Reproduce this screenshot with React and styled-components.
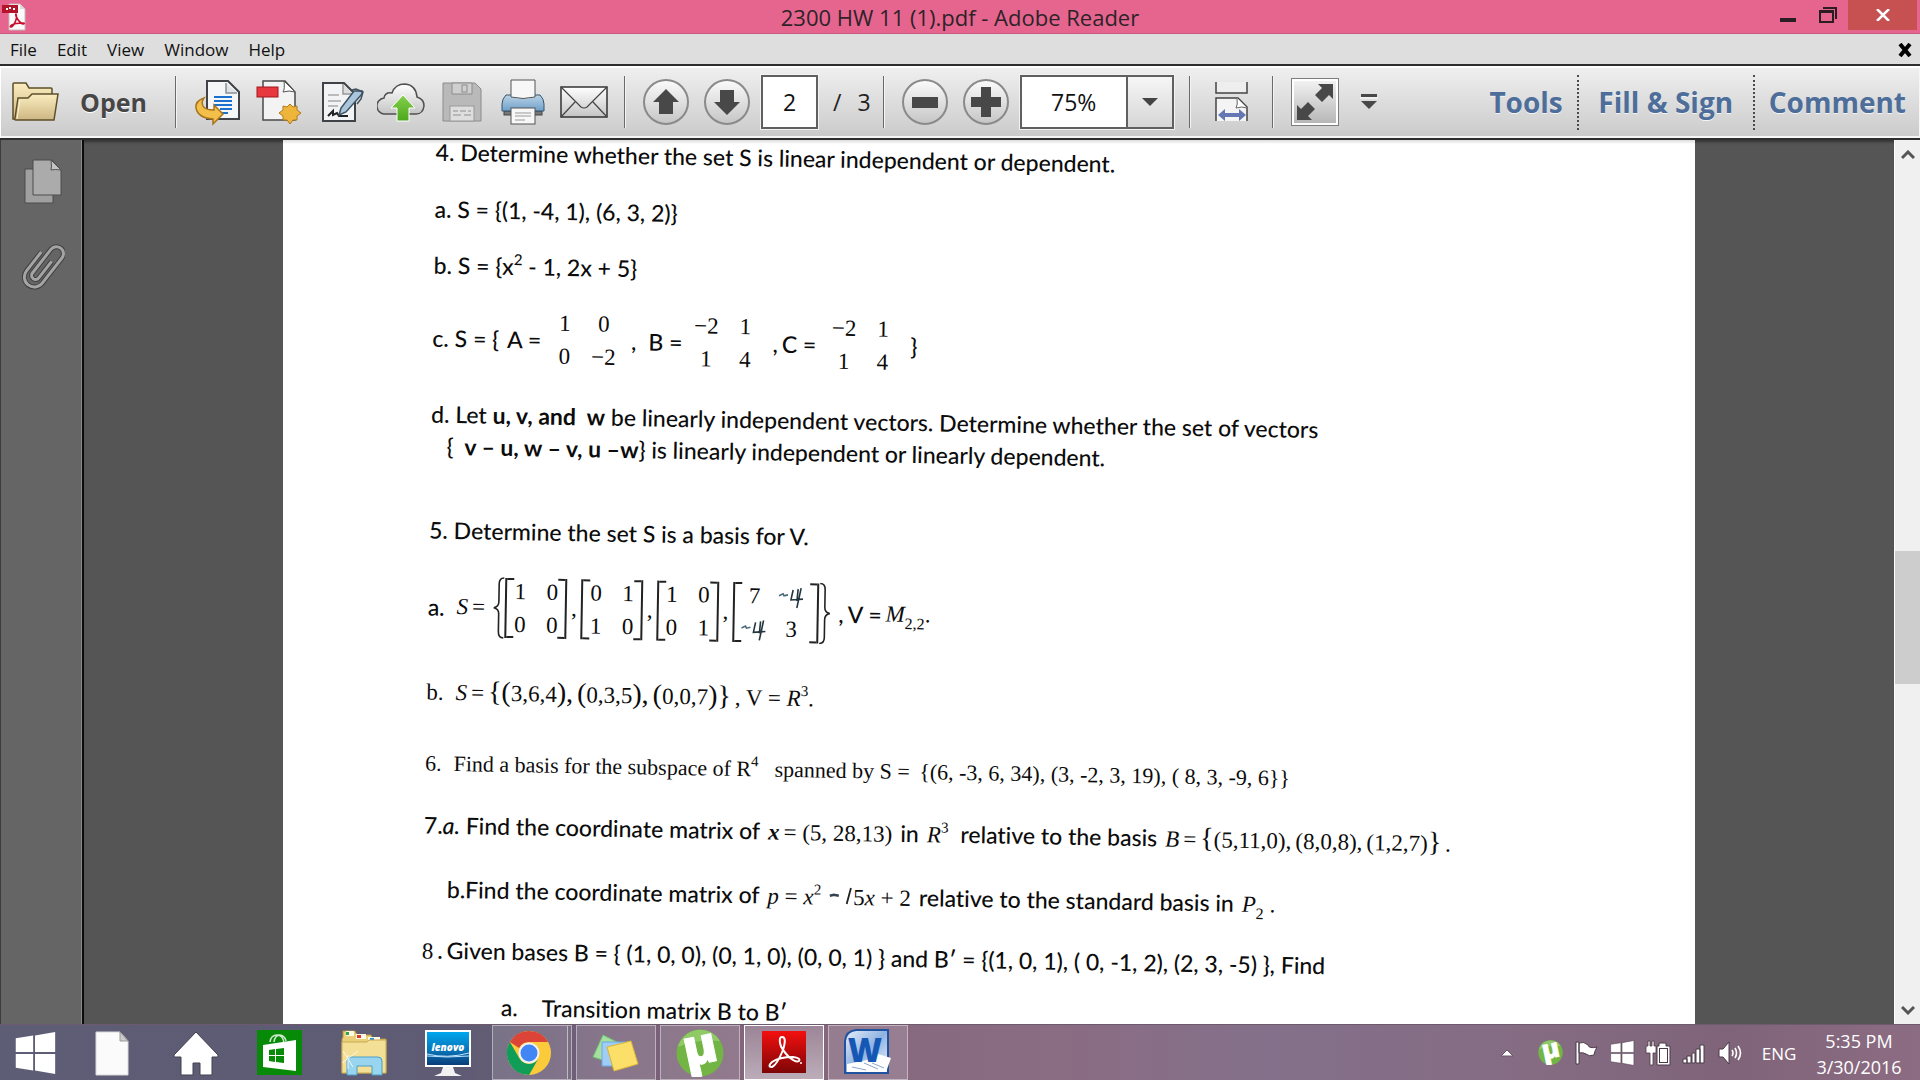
import React from "react";
import styled, { createGlobalStyle, css } from "styled-components";

const ui = '"Open Sans", "Noto Sans", sans-serif';
const body = 'Lato, "Open Sans", sans-serif';
const math = '"Liberation Serif", "DejaVu Serif", serif';

const GlobalStyle = createGlobalStyle`
  *, *::before, *::after { box-sizing: border-box; }
  html, body, #root { height: 100%; }
  body { margin: 0; font-family: ${ui}; overflow: hidden; }
  button, input, select { font-family: inherit; margin: 0; padding: 0; border: 0; background: none; color: inherit; }
  svg { display: block; flex: none; }
`;

const App = styled.div`
  display: flex;
  flex-direction: column;
  height: 100vh;
  background: #555;
`;

/* ---------- title bar ---------- */
const TitleBar = styled.header`
  display: grid;
  grid-template-columns: 1fr auto 1fr;
  align-items: center;
  height: 34px;
  flex: none;
  background: #e6658f;
  border-bottom: 1px solid #c9587e;
`;
const AppIcon = styled.span`
  padding-left: 2px;
`;
const Title = styled.h1`
  margin: 0;
  font-size: 22px;
  line-height: 34px;
  font-weight: 400;
  color: #2c2328;
`;
const WindowControls = styled.div`
  display: flex;
  justify-content: flex-end;
  align-self: start;
  padding-right: 3px;
`;
const ControlButton = styled.button`
  display: grid;
  place-items: center;
  width: ${(p) => (p.$close ? 69 : 40)}px;
  height: 30px;
  background: ${(p) => (p.$close ? "#c75050" : "transparent")};
`;

/* ---------- menu bar ---------- */
const MenuBar = styled.nav`
  display: flex;
  align-items: center;
  height: 30px;
  flex: none;
  padding: 2px 8px 0 10px;
  gap: 20px;
  background: #dedede;
`;
const MenuItem = styled.button`
  font-size: 17px;
  line-height: 28px;
  color: #111;
`;
const CloseDocument = styled.button`
  margin-left: auto;
`;

/* ---------- toolbar ---------- */
const Toolbar = styled.div`
  display: flex;
  align-items: center;
  height: 76px;
  flex: none;
  padding: 0 12px 0 10px;
  border-top: 2px solid #2e2e2e;
  border-bottom: 2px solid #2e2e2e;
  box-shadow: inset 1px 2px 0 #fff, inset -1px -2px 0 #f6f6f6;
  background: linear-gradient(#f0f0f0, #cacaca);
`;
const Separator = styled.span`
  width: 2px;
  height: 52px;
  margin: 0 ${(p) => p.$after || 10}px 0 ${(p) => p.$before || 10}px;
  background: linear-gradient(90deg, #6a6a6a 50%, #f4f4f4 50%);
`;
const OpenButton = styled.button`
  display: flex;
  align-items: center;
  gap: 20px;
  width: 155px;
  font-size: 25px;
  font-weight: 700;
  color: #464646;
  text-shadow: 0 1px 0 #fff;
`;
const ToolButton = styled.button`
  display: grid;
  place-items: center;
  width: 61px;
  height: 60px;
`;
const RoundButton = styled.button`
  display: grid;
  place-items: center;
  width: 46px;
  height: 46px;
  margin-right: 15px;
  border: 2px solid #8a8a8a;
  border-radius: 50%;
  background: linear-gradient(#fafafa, #c6c6c6);
`;
const PageInput = styled.input`
  width: 57px;
  height: 54px;
  margin-left: -4px;
  border: 2px solid #606060;
  outline: 1px solid #f2f2f2;
  background: #fff;
  font-size: 23px;
  text-align: center;
  color: #111;
`;
const PageCount = styled.span`
  display: flex;
  gap: 16px;
  width: 49px;
  margin-left: 15px;
  font-size: 23px;
  color: #222;
`;
const ZoomBox = styled.div`
  display: grid;
  grid-template-columns: 1fr 46px;
  width: 154px;
  height: 54px;
  margin-left: -4px;
  border: 2px solid #606060;
  outline: 1px solid #f2f2f2;
  background: #fff;
`;
const ZoomSelect = styled.select`
  grid-area: 1 / 1 / 2 / 3;
  appearance: none;
  padding-left: 29px;
  font-size: 23px;
  color: #111;
`;
const ZoomArrow = styled.span`
  grid-area: 1 / 2;
  display: grid;
  place-items: center;
  border-left: 2px solid #606060;
  background: linear-gradient(#f6f6f6, #d6d6d6);
  pointer-events: none;
`;
const FitButton = styled.button`
  display: grid;
  place-items: center;
  width: 48px;
  height: 48px;
  border: 1px solid #7e7e7e;
  box-shadow: inset 0 0 0 2px #fff;
  background: linear-gradient(#f4f4f4, #b4b4b4);
`;
const MoreButton = styled.button`
  margin-left: 21px;
`;
const Panels = styled.div`
  display: flex;
  margin-left: auto;
`;
const PanelButton = styled.button`
  height: 55px;
  padding: 0 14px;
  font-size: 28px;
  line-height: 55px;
  font-weight: 700;
  color: #4d6d9a;
  text-shadow: 0 1px 0 #f4f4f4;
  & + & { border-left: 2px dotted #4a4a4a; }
  &:nth-child(2) { min-width: 176px; }
  &:last-child { padding-right: 2px; }
`;

/* ---------- workspace ---------- */
const Workspace = styled.div`
  display: flex;
  flex: 1;
  min-height: 0;
`;
const SideBar = styled.aside`
  display: flex;
  flex-direction: column;
  align-items: center;
  gap: 36px;
  width: 84px;
  padding: 19px 0 0 2px;
  background: #656565;
  border-left: 1px solid #3c3c3c;
  border-right: 2px solid #0c0c0c;
  box-shadow: inset -1px 0 0 #8a8a8a;
`;
const Viewer = styled.main`
  display: flex;
  justify-content: center;
  flex: 1;
  min-width: 0;
  overflow: hidden;
  box-shadow: inset 0 4px 3px -2px #333;
`;
const Paper = styled.article`
  width: 78%;
  overflow: hidden;
  background: linear-gradient(#dcdcdc, #fff 4px);
`;
/* The sheet went through the scanner slightly crooked. */
const Scan = styled.div`
  margin-top: -5px;
  padding-left: 153px;
  transform: rotate(1deg);
  transform-origin: 0 0;
  font-family: ${body};
  font-size: 23px;
  font-weight: 500;
  font-variant-ligatures: none;
  line-height: 28px;
  color: #0c0c0c;
  white-space: nowrap;
`;
const Line = styled.p`
  display: flex;
  align-items: ${(p) => (p.$tall ? "center" : "baseline")};
  height: ${(p) => (p.$tall ? 68 : 28)}px;
  margin: ${(p) => p.$top || 0}px 0 0 ${(p) => p.$indent || 0}px;
  white-space: pre;
  ${(p) => p.$serif && css`font-family: ${math}; font-weight: 400; font-size: 22px;`}
`;
const Seg = styled.span`
  margin-left: ${(p) => p.$gap || 0}px;
`;
const M = styled.span`
  margin-left: ${(p) => p.$gap || 0}px;
  font-family: ${math};
  font-weight: ${(p) => (p.$bold ? 700 : 400)};
  font-style: ${(p) => (p.$italic ? "italic" : "normal")};
  font-size: ${(p) => (p.$big ? 28 : 23)}px;
`;
const Script = styled.span`
  font-size: ${(p) => (p.$sub ? 16 : 15)}px;
  line-height: 0;
  vertical-align: ${(p) => (p.$sub ? -7 : 10)}px;
`;
const MatrixBox = styled.span`
  display: grid;
  grid-template-columns: ${(p) => (p.$wide ? "32px 42px" : p.$open ? "39px 39px" : "32px 32px")};
  grid-template-rows: 33px 33px;
  place-items: center;
  place-content: center;
  height: 60px;
  width: ${(p) => (p.$wide ? 86 : p.$open ? 78 : 62)}px;
  margin-left: ${(p) => p.$gap || 0}px;
  font-family: ${math};
  font-weight: 400;
  font-size: 23px;
  ${(p) =>
    !p.$open &&
    css`
      background:
        linear-gradient(#222, #222) left top / 7px 2px,
        linear-gradient(#222, #222) left bottom / 7px 2px,
        linear-gradient(#222, #222) right top / 7px 2px,
        linear-gradient(#222, #222) right bottom / 7px 2px;
      background-repeat: no-repeat;
      border-left: 2px solid #222;
      border-right: 2px solid #222;
    `}
`;

const ScrollBar = styled.div`
  display: grid;
  grid-template-rows: 30px 381fr 133px 314fr 26px;
  width: 26px;
  background: #f0f0f0;
  border-left: 1px solid #fff;
`;
const ScrollButton = styled.button`
  display: grid;
  place-items: center;
`;
const ScrollThumb = styled.div`
  grid-row: 3;
  background: #cdcdcd;
`;

/* ---------- taskbar ---------- */
const TaskBar = styled.footer`
  display: flex;
  align-items: stretch;
  height: 56px;
  flex: none;
  background: linear-gradient(90deg, #5d5d75 0%, #5f5b74 24%, #755f78 32%, #83667c 40%, #8a6c83 55%, #84708a 66%, #856c83 80%, #7f6479 90%, #8c6c82 100%);
  border-top: 1px solid #6d5a6c;
`;
const TaskSlot = styled.button`
  display: grid;
  place-items: center;
  width: ${(p) => (p.$start ? 70 : 80)}px;
  margin-right: ${(p) => (p.$start ? 2 : 4)}px;
  border: 1px solid ${(p) => (p.$active ? "#fff" : p.$running ? "rgba(255,255,255,.42)" : "transparent")};
  background: ${(p) =>
    p.$active
      ? "linear-gradient(rgba(255,255,255,.2), rgba(255,255,255,.46))"
      : p.$running
      ? "rgba(255,255,255,.14)"
      : "transparent"};
  ${(p) => p.$stacked && css`padding-right: 6px; box-shadow: inset -3px 0 0 rgba(90,80,105,.7), inset -4px 0 0 rgba(255,255,255,.5);`}
`;
const Tray = styled.div`
  display: flex;
  align-items: center;
  margin-left: auto;
`;
const TrayButton = styled.button`
  display: grid;
  place-items: center;
  width: 36px;
  height: 36px;
  &:first-child { margin-right: 7px; }
`;
const Language = styled.button`
  width: 38px;
  margin-left: 12px;
  padding-top: 2px;
  font-size: 17px;
  color: #fff;
`;
const Clock = styled.time`
  display: flex;
  flex-direction: column;
  width: 122px;
  padding-top: 2px;
  font-size: 18px;
  line-height: 26px;
  text-align: center;
  color: #fff;
`;

/* ---------- small drawings ---------- */
const PdfMark = () => (
  <svg width="24" height="28" viewBox="0 0 24 28">
    <path d="M7 1h11l5 5v21H7z" fill="#fafafa" stroke="#c9b9bd" />
    <path d="M18 1v5h5" fill="#ddd" />
    <rect x="0" y="2" width="16" height="8" fill="#b3142a" />
    <path d="M4 6h2M7 5h2M11 6h2" stroke="#fff" strokeWidth="2" fill="none" />
    <path d="M14 11c2 5-3 13-5 13s0-4 12-4c3 0 0 2-2 0-4-3-6-9-5-9z" fill="none" stroke="#c8102e" strokeWidth="1.6" />
  </svg>
);
const Folder = () => (
  <svg width="50" height="42" viewBox="0 0 50 42">
    <defs>
      <linearGradient id="fold" x1="0" y1="0" x2="0" y2="1">
        <stop offset="0" stopColor="#fbedc0" /><stop offset="1" stopColor="#cdb682" />
      </linearGradient>
    </defs>
    <path d="M3 3q0-1 1-1h12l3 5h22q1 0 1 1v30H3z" fill="url(#fold)" stroke="#5e4f2a" strokeWidth="1.5" />
    <path d="M8 17h10l4-4h26l-4 26H6q-2 0-1-2z" fill="url(#fold)" stroke="#5e4f2a" strokeWidth="1.5" />
    <path d="M7 38l3-19" stroke="#fff4d2" fill="none" />
  </svg>
);
const Ico = ({ children, size = 48 }) => (
  <svg width={size} height={size} viewBox="0 0 48 48">{children}</svg>
);
const Convert = () => (
  <Ico>
    <path d="M13 3h21l11 11v27H13z" fill="#f4f6f8" stroke="#3f4247" strokeWidth="2" />
    <path d="M32 5v10h11" fill="#dfe3e6" stroke="#8a8f95" strokeWidth="1.5" />
    <path d="M20 19h18M20 23h18M20 27h18M26 31h12M28 35h6" stroke="#1c70cf" strokeWidth="2" />
    <path d="M10 20q-9 3-8 10 2 10 17 11v5l10-10-9-9v5q-9 0-11-4-2-4 1-8z" fill="#f2c04a" stroke="#a9731d" strokeWidth="1.5" />
  </Ico>
);
const CreatePdf = () => (
  <Ico>
    <path d="M8 3h22l10 11v28H8z" fill="#f3f3f3" stroke="#4a4a4a" strokeWidth="1.5" />
    <path d="M29 3q1 8-1 11 6-2 12 0z" fill="#fff" stroke="#555" />
    <rect x="2" y="9" width="21" height="10" fill="#e8383f" stroke="#a01820" />
    <path d="M35 26l3 3 4-1 0 4 4 3-4 3 0 4-4 0-3 4-3-4-4 0 0-4-4-3 4-3 0-4 4 1z" fill="#efb43a" stroke="#b07a1c" />
  </Ico>
);
const Sign = () => (
  <Ico>
    <path d="M7 5h21l11 11v27H7z" fill="#f2f3f4" stroke="#3f4247" strokeWidth="2" />
    <path d="M27 6v10h10" fill="#ddd" stroke="#999" strokeWidth="1.5" />
    <path d="M12 17h11M12 23h13M12 28h10" stroke="#bbb" strokeWidth="2" />
    <path d="M12 38l5-5v4l4-2 2 3h9" stroke="#222" strokeWidth="2" fill="none" />
    <path d="M23 37l2-7L38 13h8v3L30 34z" fill="#a9c6dc" stroke="#3d5160" strokeWidth="1.5" />
    <path d="M36 12l4-1 7 3-2 7-4 5" fill="none" stroke="#3d5160" strokeWidth="1.5" />
  </Ico>
);
const CloudUp = () => (
  <Ico>
    <defs>
      <linearGradient id="cl" x1="0" y1="0" x2="0" y2="1"><stop offset="0" stopColor="#fff" /><stop offset="1" stopColor="#c4c4c4" /></linearGradient>
      <linearGradient id="gr" x1="0" y1="0" x2="0" y2="1"><stop offset="0" stopColor="#86d04a" /><stop offset="1" stopColor="#4ba81e" /></linearGradient>
    </defs>
    <path d="M9 36a8 8 0 0 1-2-16q1-6 8-5 3-9 13-9 11 1 12 13 7 2 7 9-1 8-8 8z" fill="url(#cl)" stroke="#505050" strokeWidth="1.5" />
    <path d="M26 17l12 13h-6v13H20V30h-6z" fill="url(#gr)" stroke="#fff" strokeWidth="1" />
  </Ico>
);
const Save = () => (
  <Ico>
    <path d="M5 5h32l6 6v32H5z" fill="#b9b9b9" stroke="#8c8c8c" />
    <path d="M14 5h20v11H14z" fill="#cfcfcf" stroke="#8c8c8c" />
    <rect x="24" y="7" width="5" height="7" fill="none" stroke="#8c8c8c" />
    <rect x="12" y="28" width="24" height="15" fill="#dedede" stroke="#999" />
    <path d="M15 33h5M22 33h6M30 33h3M15 37h8M26 37h7" stroke="#aaa" strokeWidth="1.5" />
  </Ico>
);
const Print = () => (
  <Ico>
    <defs><linearGradient id="pr" x1="0" y1="0" x2="0" y2="1"><stop offset="0" stopColor="#b9d3e6" /><stop offset="1" stopColor="#6f9fc9" /></linearGradient></defs>
    <rect x="5" y="33" width="38" height="4" fill="#777" stroke="#444" />
    <path d="M7 17h34q4 4 4 9v7H3v-7q0-5 4-9z" fill="url(#pr)" stroke="#34566f" />
    <path d="M12 2h24v17q-12 3-24 0z" fill="#f7f7f7" stroke="#555" />
    <rect x="12" y="30" width="24" height="16" fill="#f7f7f7" stroke="#555" />
    <path d="M16 35h16M16 38h16M16 42h10" stroke="#999" />
  </Ico>
);
const Mail = () => (
  <Ico>
    <rect x="1" y="9" width="46" height="30" fill="url(#cl)" stroke="#333" strokeWidth="1.5" />
    <path d="M1 9l20 20q3 2 6 0L47 9M1 39l14-15M47 39L33 24" fill="none" stroke="#444" strokeWidth="1.2" />
  </Ico>
);
const ArrowGlyph = ({ down }) => (
  <svg width="28" height="28" viewBox="0 0 28 28">
    <path d={down ? "M7 2h14v12h6L14 27 1 14h6z" : "M14 1l13 13h-6v12H7V14H1z"} fill="#484848" />
  </svg>
);
const PlusMinus = ({ plus }) => (
  <svg width="32" height="32" viewBox="0 0 32 32">
    <path d={plus ? "M11 1h10v10h10v10H21v10H11V21H1V11h10z" : "M3 11h26v11H3z"} fill="#484848" />
  </svg>
);
const FitWidth = () => (
  <svg width="34" height="40" viewBox="0 0 34 40">
    <path d="M1 0v11h31V0" fill="#eee" stroke="#444" strokeWidth="1.5" />
    <path d="M1 39V16h22l9 9v14" fill="#f4f4f4" stroke="#444" strokeWidth="1.5" />
    <path d="M22 16q1 7-1 10 6-2 11 0" fill="#fff" stroke="#666" />
    <path d="M3 33l7-6v4h14v-4l7 6-7 6v-4H10v4z" fill="#6477b5" />
  </svg>
);
const Expand = () => (
  <svg width="38" height="38" viewBox="0 0 38 38">
    <path d="M22 1h15v15l-4-4-7 7-7-7 7-7zM1 37V22l4 4 7-7 7 7-7 7 4 4z" fill="#484848" />
  </svg>
);
const Chevron = ({ down }) => (
  <svg width="14" height="10" viewBox="0 0 14 10">
    <path d={down ? "M1 1l6 6 6-6" : "M1 8l6-6 6 6"} stroke="#555" strokeWidth="3" fill="none" />
  </svg>
);
const Pages = () => (
  <svg width="40" height="46" viewBox="0 0 40 46">
    <path d="M2 10h28v34H2z" fill="#a0a0a0" stroke="#4c4c4c" />
    <path d="M10 1h19l9 10v25H10z" fill="#ababab" stroke="#4c4c4c" />
    <path d="M28 1q1 7 0 10 4-1 10 0z" fill="#c4c4c4" stroke="#555" />
  </svg>
);
const Clip = () => (
  <svg width="44" height="50" viewBox="0 0 44 50">
    <g transform="rotate(38 22 25)" fill="none">
      <path d="M12 15v24a9 9 0 0 0 20 0V7a7 7 0 0 0-14 0v30a4 4 0 0 0 8 0V16" stroke="#3e3e3e" strokeWidth="5" />
      <path d="M12 15v24a9 9 0 0 0 20 0V7a7 7 0 0 0-14 0v30a4 4 0 0 0 8 0V16" stroke="#a4a4a4" strokeWidth="3" />
    </g>
  </svg>
);
const Brace = ({ flip }) => (
  <svg width="12" height="62" viewBox="0 0 12 62">
    <path d={flip ? "M1 1q5 0 5 6v18q0 5 5 6-5 1-5 6v18q0 6-5 6" : "M11 1q-5 0-5 6v18q0 5-5 6 5 1 5 6v18q0 6 5 6"} fill="none" stroke="#222" strokeWidth="1.6" />
  </svg>
);
/* pen corrections left on the scanned sheet */
const PenFour = () => (
  <svg width="28" height="26" viewBox="0 0 28 26">
    <path d="M1 12l4-2 1 2 4-1" fill="none" stroke="#4c6b78" strokeWidth="1.6" />
    <path d="M15 6l-2 10 12-1M20 5l-1 12M23 4l-4 20" fill="none" stroke="#23353e" strokeWidth="1.6" />
  </svg>
);
const PenOne = () => (
  <svg width="24" height="18" viewBox="0 0 24 18">
    <path d="M1 9l4-1 5 1" fill="none" stroke="#33424e" strokeWidth="2.5" />
    <path d="M22 1l-4 16" fill="none" stroke="#222" strokeWidth="1.8" />
  </svg>
);

const WinPath = "M3 8l19-3v18H3zM24 5l22-4v22H24zM3 25h19v18L3 40zM24 25h22v22l-22-4z";
const StartLogo = () => <Ico size={44}><path d={WinPath} fill="#fff" /></Ico>;
const BlankPage = () => (
  <Ico><path d="M8 3h24l8 9v34H8z" fill="#fbfbfb" stroke="#d8d8d8" /><path d="M32 3v9h8z" fill="#ccc" stroke="#999" /></Ico>
);
const Home = () => (
  <Ico><path d="M24 3L46 26v2h-6v18H28V34h-7v12H9V28H2v-2z" fill="#fff" stroke="#43404f" strokeWidth="1" /></Ico>
);
const Store = () => (
  <Ico>
    <rect x="1" y="1" width="45" height="45" fill="#078a07" />
    <path d="M14 13q1-7 7-7t7 8M18 13q1-7 6-7 5 1 6 6" fill="none" stroke="#cfe8cf" strokeWidth="1.5" />
    <path d="M7 16l33-5v31L7 38z" fill="#fff" />
    <path d="M13 21l6-1v6h-6zM20 20l8-1v7h-8zM13 27h6v6l-6-1zM20 27h8v7l-8-1z" fill="#078a07" />
  </Ico>
);
const Explorer = () => (
  <Ico>
    <path d="M3 8V2h12l2 4h14l1 4h14v34H2V10z" fill="#e8cf78" stroke="#b49542" />
    <path d="M6 2h8v5H6zM16 5h10v5H16zM28 8h12v5H28z" fill="#fff8e4" />
    <path d="M6 3h3v3H6z" fill="#2fa54b" /><path d="M17 6h4v3h-4z" fill="#e0362c" /><path d="M30 9h4v3h-4z" fill="#2b8fd6" />
    <path d="M2 13h25l2-2h17v33H2z" fill="#f3df95" stroke="#c9ab57" />
    <path d="M7 46V32q0-4 4-4h27q4 0 4 4v14H32V37H17v9z" fill="#9ad5f0" stroke="#4a9fc9" />
    <path d="M2 34l16-12M3 22l10 16M8 26v14" stroke="#fff" opacity=".8" />
  </Ico>
);
const Monitor = () => (
  <Ico>
    <defs><linearGradient id="mon" x1="0" y1="0" x2="0" y2="1"><stop offset="0" stopColor="#00a7ee" /><stop offset=".6" stopColor="#0770b4" /><stop offset="1" stopColor="#0b3c78" /></linearGradient></defs>
    <rect x="1" y="1" width="46" height="37" fill="#fff" />
    <rect x="3" y="3" width="42" height="33" fill="url(#mon)" />
    <path d="M3 25q20 5 42-1M3 27q20 2 42 0" stroke="#bfe4ff" fill="none" />
    <text x="24" y="22" textAnchor="middle" fontFamily="Open Sans, sans-serif" fontStyle="italic" fontWeight="800" fontSize="10" fill="#fff">lenovo</text>
    <path d="M19 38h10l2 6 7 3H10l7-3z" fill="#f2f2f2" />
  </Ico>
);
const Chrome = () => (
  <Ico>
    <circle cx="24" cy="24" r="22" fill="#fccb3c" />
    <path d="M4.900 13A22 22 0 0 1 43.100 13H24A11 11 0 0 0 14 19z" fill="#db4437" />
    <path d="M4.900 13A22 22 0 0 0 24 46L33.500 29.500A11 11 0 0 1 14.500 29.500z" fill="#0f9d58" />
    <circle cx="24" cy="24" r="10.500" fill="#f2f2f2" /><circle cx="24" cy="24" r="8.500" fill="#4285f4" />
  </Ico>
);
const Notes = () => (
  <Ico>
    <path d="M11 6l24 12-9 18L1 28z" fill="#a6dfa2" stroke="#6fbf6e" />
    <path d="M10 13h26v24H10z" fill="#9fcdf5" stroke="#6ea9dd" />
    <path d="M15 18l24-6 7 23-24 7z" fill="#fbdf68" stroke="#d9b53a" />
  </Ico>
);
const Torrent = ({ size }) => (
  <Ico size={size}>
    <circle cx="24" cy="24" r="23.500" fill="#72b545" />
    <path d="M2 18a23 23 0 0 1 42-6Q20 10 2 18z" fill="#8fca66" />
    <text x="25" y="35" textAnchor="middle" fontFamily="Open Sans, sans-serif" fontWeight="800" fontSize="50" fill="#fff" stroke="#fff" strokeWidth="1" transform="rotate(-12 24 24)">µ</text>
  </Ico>
);
const Acrobat = () => (
  <Ico>
    <defs><linearGradient id="acr" x1="0" y1="0" x2="0" y2="1"><stop offset="0" stopColor="#f40f0f" /><stop offset="1" stopColor="#7d0606" /></linearGradient></defs>
    <rect x="2" y="2" width="44" height="42" fill="url(#acr)" />
    <path d="M22 8q5 0 1 13Q17 36 12 38q-5 0 0-5 7-5 21-5 8 1 6 4-3 2-10-4-8-8-9-14-1-6 2-6z" fill="none" stroke="#fff" strokeWidth="2" />
    <circle cx="41" cy="34" r="1" fill="#fff" />
  </Ico>
);
const Word = () => (
  <Ico>
    <defs><linearGradient id="wd" x1="0" y1="0" x2="1" y2="1"><stop offset="0" stopColor="#e9f0fb" /><stop offset=".5" stopColor="#8fb2e2" /><stop offset="1" stopColor="#f2f6fc" /></linearGradient></defs>
    <path d="M12 1h32v43H1V12Q2 2 12 1z" fill="url(#wd)" stroke="#1f53a0" strokeWidth="2" />
    <path d="M3 35l20-4 11-6 13 4-5 14H3z" fill="#fff" />
    <path d="M20 34l14 6M28 34l12 5M8 38l14 3" stroke="#8aa6cf" />
    <text x="21" y="33" textAnchor="middle" fontFamily="Open Sans, sans-serif" fontWeight="800" fontSize="33" fill="#1457b5">W</text>
  </Ico>
);
const TrayIco = ({ children }) => <svg width="26" height="26" viewBox="0 0 26 26">{children}</svg>;
const Flag = () => (
  <TrayIco><path d="M3 2h3v22H3zM6 3q5-2 9 2 1 4 9 2-2 3-3 8-5 2-8-1-3-2-7-1z" fill="#fff" stroke="#4a3a48" /></TrayIco>
);
const Battery = () => (
  <TrayIco>
    <path d="M14 3h7v3h4v19H12V6h2z" fill="#fff" stroke="#4a3a48" />
    <path d="M14 8h9v15h-9z" fill="#4a3a48" />
    <path d="M15 9h7v13h-7z" fill="#fff" />
    <path d="M3 1h2v5h2V1h2v5h2v7H8v12H5V13H1V6h2z" fill="#fff" stroke="#4a3a48" strokeWidth=".8" />
  </TrayIco>
);
const Signal = () => (
  <TrayIco><path d="M2 19h4v4H2zM6 16h4v7H6zM11 13h3v10h-3zM15 9h4v14h-4zM19 5h4v18h-4z" fill="#fff" stroke="#4a3a48" /></TrayIco>
);
const Speaker = () => (
  <TrayIco>
    <path d="M2 9h4l6-7v22l-6-7H2z" fill="#fff" stroke="#4a3a48" />
    <path d="M15 10q2 3 0 6M18 8q3 5 0 10M21 6q5 7 0 14" fill="none" stroke="#fff" strokeWidth="1.6" />
  </TrayIco>
);

/* ---------- document helpers ---------- */
const Matrix = ({ cells, ...rest }) => (
  <MatrixBox {...rest}>{cells.map((c, i) => <span key={i}>{c}</span>)}</MatrixBox>
);

const tools = [
  ["Convert", Convert], ["Create PDF", CreatePdf], ["Sign", Sign], ["Upload", CloudUp],
  ["Save", Save], ["Print", Print], ["Email", Mail],
];

const Document = () => (
  <Scan>
    <Line>4. Determine whether the set S is linear independent or dependent.</Line>
    <Line $top={29}>{"a. S = {(1, -4, 1), (6, 3, 2)}"}</Line>
    <Line $top={28}><Seg>{"b. S = {x"}<Script>2</Script>{" - 1, 2x + 5}"}</Seg></Line>
    <Line $top={25} $tall>
      <Seg>{"c. S = {"}</Seg><Seg $gap={8}>A =</Seg>
      <Matrix $open $gap={4} cells={["1", "0", "0", "−2"]} />
      <Seg $gap={8}>,</Seg><Seg $gap={12}>B =</Seg>
      <Matrix $open $gap={4} cells={["−2", "1", "1", "4"]} />
      <Seg $gap={8}>,</Seg><Seg $gap={4}>C =</Seg>
      <Matrix $open $gap={8} cells={["−2", "1", "1", "4"]} />
      <Seg $gap={8}>{"}"}</Seg>
    </Line>
    <Line $top={28}><Seg>d. Let <b>u, v, and  w</b> be linearly independent vectors. Determine whether the set of vectors</Seg></Line>
    <Line $top={4} $indent={16}><Seg>{"{ "}<b> v – u, w – v, u –w</b>{"} is linearly independent or linearly dependent."}</Seg></Line>
    <Line $top={56}>5. Determine the set S is a basis for V.</Line>
    <Line $top={29} $tall>
      <Seg>a.</Seg><M $gap={12} $italic>S</M><M $gap={4}>=</M>
      <Seg $gap={8}><Brace /></Seg>
      <Matrix cells={["1", "0", "0", "0"]} /><M $gap={4}>,</M>
      <Matrix $gap={4} cells={["0", "1", "1", "0"]} /><M $gap={4}>,</M>
      <Matrix $gap={4} cells={["1", "0", "0", "1"]} /><M $gap={4}>,</M>
      <Matrix $gap={4} $wide cells={["7", <PenFour />, <PenFour />, "3"]} />
      <Brace flip />
      <Seg $gap={8}>,</Seg><Seg $gap={4}>V =</Seg>
      <M $gap={4}><i>M</i><Script $sub>2,2</Script>.</M>
    </Line>
    <Line $top={36}>
      <M>b.</M><M $gap={12} $italic>S</M><M $gap={4}>=</M>
      <M $gap={4} $big>{"{("}</M><M>3,6,4</M><M $big>),</M>
      <M $gap={4} $big>(</M><M>0,3,5</M><M $big>),</M>
      <M $gap={4} $big>(</M><M>0,0,7</M><M $big>{")}"}</M>
      <M $gap={4}>{", V = "}<i>R</i><Script>3</Script>.</M>
    </Line>
    <Line $top={45} $serif>
      <Seg>6.</Seg><Seg $gap={12}>Find a basis for the subspace of R<Script>4</Script></Seg>
      <Seg $gap={16}>{"spanned by S = "}</Seg><Seg $gap={4}>{"{(6, -3, 6, 34), (3, -2, 3, 19), ( 8, 3, -9, 6}}"}</Seg>
    </Line>
    <Line $top={33}>
      <Seg>7.<i>a.</i> Find the coordinate matrix of</Seg>
      <M $gap={8} $bold $italic>x</M><M $gap={4}>= (5, 28,13)</M><Seg $gap={8}>in</Seg>
      <M $gap={8}><i>R</i><Script>3</Script></M><Seg $gap={12}>relative to the basis</Seg>
      <M $gap={8} $italic>B</M><M $gap={4}>=</M><M $gap={4} $big>{"{"}</M>
      <M>(5,11,0),</M><M $gap={4}>(8,0,8),</M><M $gap={4}>(1,2,7)</M><M $big>{"}"}</M><M $gap={4}>.</M>
    </Line>
    <Line $top={36} $indent={24}>
      <Seg>b.Find the coordinate matrix of</Seg>
      <M $gap={8}><i>p</i> = <i>x</i><Script>2</Script></M>
      <Seg $gap={8}><PenOne /></Seg><M>5<i>x</i> + 2</M>
      <Seg $gap={8}>relative to the standard basis in</Seg>
      <M $gap={8}><i>P</i><Script $sub>2</Script> .</M>
    </Line>
    <Line $top={33}><M>8</M><Seg $gap={4}>.</Seg><Seg $gap={4}>{"Given bases B = { (1, 0, 0), (0, 1, 0), (0, 0, 1) } and B′ = {(1, 0, 1), ( 0, -1, 2), (2, 3, -5) }, Find"}</Seg></Line>
    <Line $top={28} $indent={80}><Seg>a.</Seg><Seg $gap={24}>Transition matrix B to B′</Seg></Line>
  </Scan>
);

export default function ReaderWindow() {
  return (
    <App>
      <GlobalStyle />
      <TitleBar>
        <AppIcon><PdfMark /></AppIcon>
        <Title>2300 HW 11 (1).pdf - Adobe Reader</Title>
        <WindowControls>
          <ControlButton aria-label="Minimize">
            <svg width="16" height="16" viewBox="0 0 16 16"><path d="M0 11h16v4H0z" fill="#2b1d24" /></svg>
          </ControlButton>
          <ControlButton aria-label="Restore">
            <svg width="18" height="16" viewBox="0 0 18 16"><path d="M4 1h13v11M1 4h13v11H1zM1 5h13" fill="none" stroke="#2b1d24" strokeWidth="2" /></svg>
          </ControlButton>
          <ControlButton $close aria-label="Close">
            <svg width="14" height="12" viewBox="0 0 14 12"><path d="M1 0l12 12M13 0L1 12" stroke="#fff" strokeWidth="2.500" /></svg>
          </ControlButton>
        </WindowControls>
      </TitleBar>
      <MenuBar>
        {["File", "Edit", "View", "Window", "Help"].map((m) => <MenuItem key={m}>{m}</MenuItem>)}
        <CloseDocument aria-label="Close document">
          <svg width="14" height="14" viewBox="0 0 14 14"><path d="M2 1l10 12M12 1L2 13" stroke="#000" strokeWidth="4" /></svg>
        </CloseDocument>
      </MenuBar>
      <Toolbar>
        <OpenButton><Folder />Open</OpenButton>
        <Separator />
        {tools.map(([name, Icon]) => <ToolButton key={name} aria-label={name}><Icon /></ToolButton>)}
        <Separator $after={17} />
        <RoundButton aria-label="Previous page"><ArrowGlyph /></RoundButton>
        <RoundButton aria-label="Next page"><ArrowGlyph down /></RoundButton>
        <PageInput aria-label="Page number" defaultValue="2" />
        <PageCount><span>/</span><span>3</span></PageCount>
        <Separator $before={1} $after={17} />
        <RoundButton aria-label="Zoom out"><PlusMinus /></RoundButton>
        <RoundButton aria-label="Zoom in"><PlusMinus plus /></RoundButton>
        <ZoomBox>
          <ZoomSelect aria-label="Zoom level" defaultValue="75%">
            <option>50%</option><option>75%</option><option>100%</option>
          </ZoomSelect>
          <ZoomArrow><svg width="16" height="10" viewBox="0 0 16 10"><path d="M0 1h16L8 9z" fill="#444" /></svg></ZoomArrow>
        </ZoomBox>
        <Separator $before={15} />
        <ToolButton aria-label="Fit width"><FitWidth /></ToolButton>
        <Separator $after={17} />
        <FitButton aria-label="Full screen"><Expand /></FitButton>
        <MoreButton aria-label="More tools">
          <svg width="18" height="16" viewBox="0 0 18 16"><path d="M1 0h16v3H1zM1 7h16l-8 8z" fill="#484848" /><path d="M0 4h18" stroke="#fff" /></svg>
        </MoreButton>
        <Panels>
          <PanelButton>Tools</PanelButton>
          <PanelButton>Fill &amp; Sign</PanelButton>
          <PanelButton>Comment</PanelButton>
        </Panels>
      </Toolbar>
      <Workspace>
        <SideBar>
          <button aria-label="Page thumbnails"><Pages /></button>
          <button aria-label="Attachments"><Clip /></button>
        </SideBar>
        <Viewer><Paper><Document /></Paper></Viewer>
        <ScrollBar>
          <ScrollButton aria-label="Scroll up"><Chevron /></ScrollButton>
          <span />
          <ScrollThumb />
          <span />
          <ScrollButton aria-label="Scroll down"><Chevron down /></ScrollButton>
        </ScrollBar>
      </Workspace>
      <TaskBar>
        <TaskSlot $start aria-label="Start"><StartLogo /></TaskSlot>
        <TaskSlot aria-label="New document"><BlankPage /></TaskSlot>
        <TaskSlot aria-label="Home"><Home /></TaskSlot>
        <TaskSlot aria-label="Store"><Store /></TaskSlot>
        <TaskSlot aria-label="File Explorer"><Explorer /></TaskSlot>
        <TaskSlot aria-label="Lenovo"><Monitor /></TaskSlot>
        <TaskSlot $running $stacked aria-label="Chrome"><Chrome /></TaskSlot>
        <TaskSlot $running aria-label="Sticky Notes"><Notes /></TaskSlot>
        <TaskSlot $running aria-label="µTorrent"><Torrent /></TaskSlot>
        <TaskSlot $running $active aria-label="Adobe Reader"><Acrobat /></TaskSlot>
        <TaskSlot $running aria-label="Word"><Word /></TaskSlot>
        <Tray>
          <TrayButton aria-label="Show hidden icons">
            <svg width="14" height="8" viewBox="0 0 14 8"><path d="M7 1l6 6H1z" fill="#fff" stroke="#6b5668" /></svg>
          </TrayButton>
          <TrayButton aria-label="µTorrent status"><Torrent size={25} /></TrayButton>
          <TrayButton aria-label="Action Center"><Flag /></TrayButton>
          <TrayButton aria-label="Windows Update"><Ico size={26}><path d={WinPath} fill="#fff" stroke="#4a3a48" strokeWidth="1" /></Ico></TrayButton>
          <TrayButton aria-label="Power"><Battery /></TrayButton>
          <TrayButton aria-label="Network"><Signal /></TrayButton>
          <TrayButton aria-label="Volume"><Speaker /></TrayButton>
          <Language>ENG</Language>
          <Clock><span>5:35 PM</span><span>3/30/2016</span></Clock>
        </Tray>
      </TaskBar>
    </App>
  );
}
